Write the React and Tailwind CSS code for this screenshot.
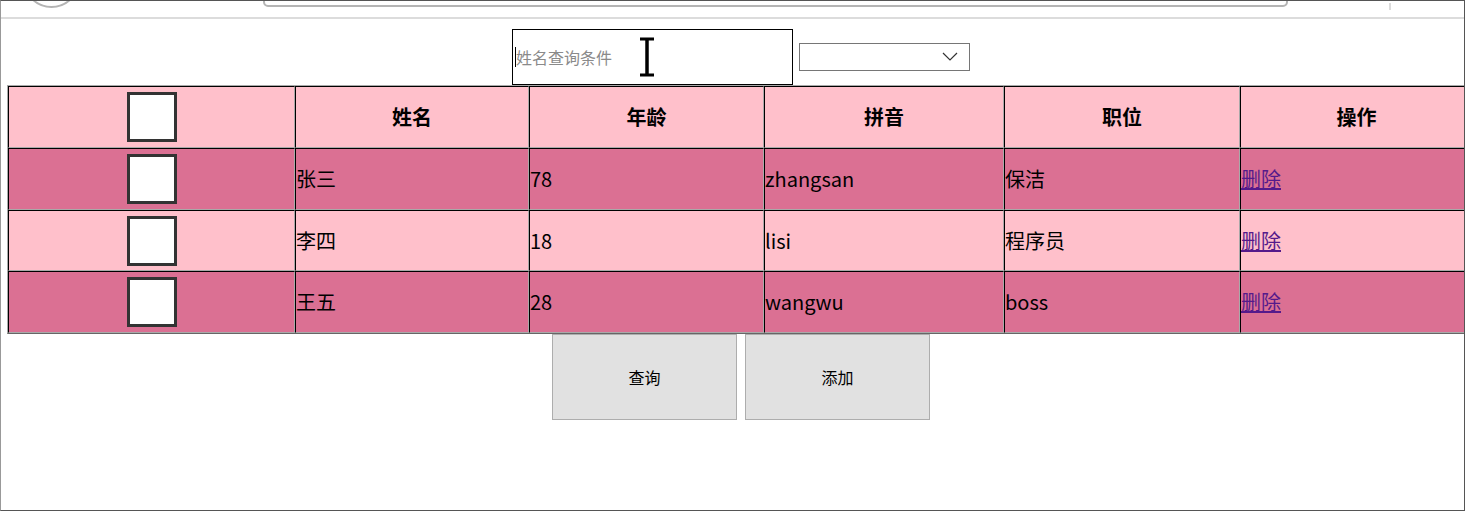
import React from "react";

const rows = [
  { name: "张三", age: "78", pinyin: "zhangsan", job: "保洁", dark: true, h: "h-[62px]" },
  { name: "李四", age: "18", pinyin: "lisi", job: "程序员", dark: false, h: "h-[61px]" },
  { name: "王五", age: "28", pinyin: "wangwu", job: "boss", dark: true, h: "h-[62px]" },
];

const cell =
  "p-0 border-t border-l border-t-black border-l-black border-b border-r border-b-[#a9a9a9] border-r-[#a9a9a9] align-middle";

const Box = () => (
  <div className="mx-auto w-[50px] h-[50px] bg-white border-[3px] border-[#333]" />
);

export default function App() {
  return (
    <div className="relative w-[1465px] h-[511px] overflow-hidden bg-white border border-[#555] border-l-[#999] font-['Noto_Sans_CJK_SC',sans-serif] text-black">
      {/* browser chrome leftover */}
      <div className="relative h-[18px] border-b-2 border-[#dcdcdc]">
        <div className="absolute left-[22px] top-[-50px] w-[57px] h-[57px] rounded-full border-2 border-[#b4b4b4]" />
        <div className="absolute left-[262px] top-[-10px] w-[1025px] h-[16px] rounded-[5px] border-2 border-[#b4b4b4]" />
        <div className="absolute left-[1388px] top-[2px] w-[2px] h-[7px] bg-[#dcdcdc]" />
      </div>

      <div className="ml-[6px] w-[1467px] pt-[10px]">
        {/* search row */}
        <div className="flex items-center justify-center gap-[6px] pl-[1px]">
          <div className="relative w-[281px] h-[56px] border border-black flex items-center pl-[2px]">
            <span className="w-px h-[20px] bg-black" />
            <span className="text-[16px] text-[#8a8a8a] leading-none">姓名查询条件</span>
            <svg
              className="absolute left-[126px] top-[7px]"
              width="16"
              height="40"
              viewBox="0 0 16 40"
            >
              <path d="M1 2h14M1 38h14" stroke="#000" strokeWidth="3" />
              <path d="M8 2v36" stroke="#000" strokeWidth="3.5" />
            </svg>
          </div>
          <div className="relative w-[171px] h-[28px] border border-[#767676]">
            <svg
              className="absolute right-[11px] top-[8px]"
              width="16"
              height="10"
              viewBox="0 0 16 10"
            >
              <path d="M1 1l7 7 7-7" fill="none" stroke="#333" strokeWidth="1.2" />
            </svg>
          </div>
        </div>

        {/* table */}
        <table className="w-[1467px] table-fixed border-separate border-spacing-0 border border-t-[#a9a9a9] border-l-[#a9a9a9] border-b-[#666] border-r-[#666] text-[20px] leading-none">
          <colgroup>
            <col className="w-[287px]" />
            <col className="w-[234px]" />
            <col className="w-[235px]" />
            <col className="w-[240px]" />
            <col className="w-[236px]" />
            <col />
          </colgroup>
          <thead>
            <tr className="bg-[#ffc0cb]">
              <th className={cell + " h-[62px]"}>
                <Box />
              </th>
              <th className={cell + " h-[62px] font-bold text-center"}>姓名</th>
              <th className={cell + " h-[62px] font-bold text-center"}>年龄</th>
              <th className={cell + " h-[62px] font-bold text-center"}>拼音</th>
              <th className={cell + " h-[62px] font-bold text-center"}>职位</th>
              <th className={cell + " h-[62px] font-bold text-center"}>操作</th>
            </tr>
          </thead>
          <tbody>
            {rows.map((r) => (
              <tr key={r.name} className={r.dark ? "bg-[#db7093]" : "bg-[#ffc0cb]"}>
                <td className={cell + " " + r.h}>
                  <Box />
                </td>
                <td className={cell}>{r.name}</td>
                <td className={cell}>{r.age}</td>
                <td className={cell}>{r.pinyin}</td>
                <td className={cell}>{r.job}</td>
                <td className={cell}>
                  <a href="#" className="text-[#551a8b] underline">
                    删除
                  </a>
                </td>
              </tr>
            ))}
          </tbody>
        </table>

        {/* buttons */}
        <div className="flex justify-center gap-[8px] pl-[1px]">
          <button className="w-[185px] h-[86px] bg-[#e1e1e1] border border-[#adadad] text-[16px]">
            查询
          </button>
          <button className="w-[185px] h-[86px] bg-[#e1e1e1] border border-[#adadad] text-[16px]">
            添加
          </button>
        </div>
      </div>
    </div>
  );
}
